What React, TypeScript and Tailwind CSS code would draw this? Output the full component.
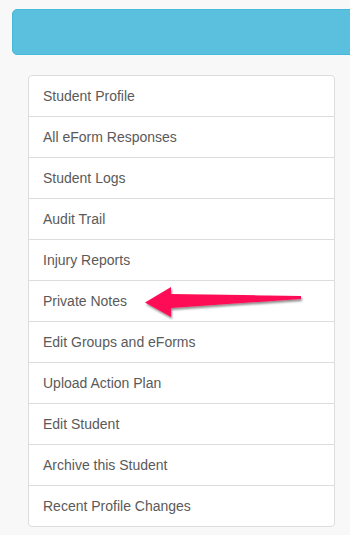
const items = [
  "Student Profile",
  "All eForm Responses",
  "Student Logs",
  "Audit Trail",
  "Injury Reports",
  "Private Notes",
  "Edit Groups and eForms",
  "Upload Action Plan",
  "Edit Student",
  "Archive this Student",
  "Recent Profile Changes",
];

const Arrow = () => (
  <svg
    className="absolute left-[140px] top-[283px] pointer-events-none"
    width="170"
    height="40"
    viewBox="0 0 170 40"
  >
    <defs>
      <filter id="sh" x="-10%" y="-30%" width="120%" height="160%">
        <feDropShadow dx="1" dy="2" stdDeviation="1.2" floodColor="#000" floodOpacity="0.45" />
      </filter>
    </defs>
    {/* tip at (5,19.5) in local coords */}
    <path
      d="M5 19.5 L31 4 L31 11 L161 13 L161 16 L31 25 L31 34 Z"
      fill="#fe0f57"
      filter="url(#sh)"
    />
  </svg>
);

export default function App() {
  return (
    <div className="relative min-h-[535px] w-[350px] bg-[#f8f8f8] font-['Liberation_Sans',Arial,sans-serif] overflow-hidden">
      <div className="pt-[9px] pl-[12px]">
        <div className="h-[46px] w-[360px] rounded-l-[5px] bg-[#5bc0de] border border-[#46b8da]" />
      </div>
      <div className="mt-[20px] ml-[28px] w-[307px] rounded-[4px] border border-[#dddddd] bg-white">
        {items.map((label, i) => (
          <div
            key={label}
            className={`box-content h-[40px] flex items-center pl-[14px] text-[14px] text-[#5a5a5a] ${
              i > 0 ? "border-t border-[#dddddd]" : ""
            }`}
          >
            {label}
          </div>
        ))}
      </div>
      <Arrow />
    </div>
  );
}
